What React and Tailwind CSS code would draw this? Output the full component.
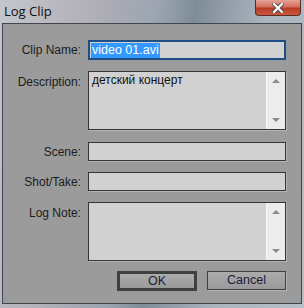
import React from 'react'

const font = { fontFamily: '"Liberation Sans", Arial, sans-serif' }

function Label({ children, className = '' }) {
  return (
    <div className={`w-[77px] shrink-0 text-right text-[12px] text-[#1c1c1c] ${className}`}>{children}</div>
  )
}

function Field({ className = '' }) {
  return (
    <div className={`h-[19px] w-[198px] border border-[#363636] bg-[#d1d1d1] shadow-[1px_1px_0_#b4b4b4] ${className}`}></div>
  )
}

function Scrollbar() {
  return (
    <div className="flex w-[19px] flex-col items-center justify-between border-l border-[#f7f7f7] bg-[#ececec] py-[7px]">
      <div className="h-0 w-0 border-x-[4px] border-b-[4px] border-x-transparent border-b-[#8a8a8a]"></div>
      <div className="h-0 w-0 border-x-[4px] border-t-[4px] border-x-transparent border-t-[#8a8a8a]"></div>
    </div>
  )
}

function TextArea({ text }) {
  return (
    <div className="flex h-[59px] w-[198px] border border-[#363636] bg-[#d1d1d1] shadow-[1px_1px_0_#b4b4b4]">
      <div className="flex-1 px-[3px] pt-[1px] text-[12px] leading-[15px] text-[#111]">{text}</div>
      <Scrollbar />
    </div>
  )
}

export default function App() {
  return (
    <div
      className="flex h-[308px] w-[304px] flex-col bg-[linear-gradient(100deg,#c4c6cc_0%,#b3b0b8_25%,#9aa4b0_45%,#7f8c99_55%,#aab4be_75%,#b6c0c8_100%)]"
      style={font}
    >
      <div className="relative flex h-[23px] shrink-0 items-center pl-[4px]">
        <span className="text-[13px] text-[#101010]" style={{ fontFamily: '"Open Sans", "Liberation Sans", sans-serif' }}>
          Log Clip
        </span>
        <div className="absolute right-[3px] top-0 flex h-[16px] w-[46px] items-center justify-center rounded-b-[4px] border border-t-0 border-[#5b2b26] bg-[linear-gradient(#e6a497_0%,#d4705f_45%,#b83a25_55%,#c95a3f_100%)]">
          <svg width="12" height="10" viewBox="0 0 12 10">
            <path d="M2 1 L10 9 M10 1 L2 9" stroke="#4a4a4a" strokeWidth="4" strokeLinecap="square" />
            <path d="M2 1 L10 9 M10 1 L2 9" stroke="#ffffff" strokeWidth="2.2" strokeLinecap="square" />
          </svg>
        </div>
      </div>
      <div className="mx-[2px] mb-[4px] flex flex-1 flex-col border border-[#3e4650] bg-[#9b9b9b] pl-[1px]">
        <div className="mt-[16px] flex items-center gap-[7px]">
          <Label>Clip Name:</Label>
          <div className="flex h-[20px] w-[198px] items-center border-2 border-[#1d4f86] bg-[#d1d1d1] pl-[1px]">
            <span className="bg-[#3399ff] px-[1px] text-[12.5px] leading-[15px] text-white">video 01.avi</span>
          </div>
        </div>
        <div className="mt-[11px] flex items-start gap-[7px]">
          <Label className="pt-[2px]">Description:</Label>
          <TextArea text="детский концерт" />
        </div>
        <div className="mt-[12px] flex items-center gap-[7px]">
          <Label>Scene:</Label>
          <Field />
        </div>
        <div className="mt-[11px] flex items-center gap-[7px]">
          <Label>Shot/Take:</Label>
          <Field />
        </div>
        <div className="mt-[11px] flex items-start gap-[7px]">
          <Label className="pt-[2px]">Log Note:</Label>
          <TextArea text="" />
        </div>
        <div className="mt-[10px] flex w-[282px] justify-end gap-[10px]">
          <button className="flex h-[20px] w-[80px] items-center justify-center border-[3px] border-[#3f3f3f] bg-[linear-gradient(#ababab,#9a9a9a)] text-[12.5px] text-[#1c1c3c]">
            OK
          </button>
          <button className="flex h-[19px] w-[79px] items-center justify-center border border-[#3f3f3f] bg-[linear-gradient(#ababab,#9a9a9a)] text-[12.5px] text-[#1c1c3c] shadow-[1px_1px_0_#b4b4b4]">
            Cancel
          </button>
        </div>
      </div>
    </div>
  )
}
